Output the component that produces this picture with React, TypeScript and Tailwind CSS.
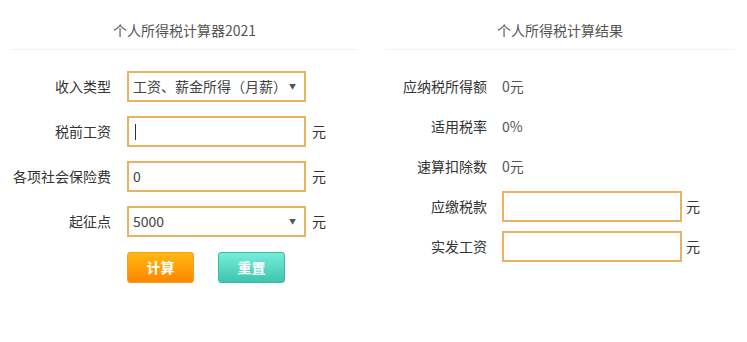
import React from "react";

const font = { fontFamily: '"Noto Sans CJK SC", "Noto Sans", sans-serif' };

function Header({ title }: { title: string }) {
  return (
    <div className="mx-3 h-[50px] border-b border-[#f1f1f1] flex items-end justify-center pb-[10px]">
      <span className="text-[14px] leading-[18px] text-[#555]">{title}</span>
    </div>
  );
}

function LeftRow({ label, children, unit }: { label: string; children: React.ReactNode; unit?: boolean }) {
  return (
    <div className="flex items-center h-[31px] mb-[14px]">
      <div className="w-[111px] text-right text-[14px] text-[#333]">{label}</div>
      <div className="ml-[16px] w-[179px] h-[31px]">{children}</div>
      {unit && <span className="ml-[6px] text-[14px] text-[#333]">元</span>}
    </div>
  );
}

function Box({ children }: { children?: React.ReactNode }) {
  return (
    <div className="w-full h-full border-2 border-[#e9b263] bg-white flex items-center px-[4px] text-[14px] text-[#444]">
      {children}
    </div>
  );
}

function SelectBox({ value }: { value: string }) {
  return (
    <Box>
      <span className="flex-1 whitespace-nowrap">{value}</span>
      <span className="text-[7px] text-[#555] mr-[4px]">▼</span>
    </Box>
  );
}

function RightRow({ label, children, unit }: { label: string; children: React.ReactNode; unit?: boolean }) {
  return (
    <div className="flex items-center h-[30px] mb-[10px]">
      <div className="w-[114px] text-right text-[14px] text-[#333]">{label}</div>
      <div className="ml-[15px] text-[14px] text-[#555]">{children}</div>
      {unit && <span className="ml-[4px] text-[14px] text-[#333]">元</span>}
    </div>
  );
}

export default function App() {
  return (
    <div style={font} className="w-[747px] h-[342px] bg-white flex">
      <div className="w-[369px]">
        <Header title="个人所得税计算器2021" />
        <div className="pt-[21px]">
          <LeftRow label="收入类型">
            <SelectBox value="工资、薪金所得（月薪）" />
          </LeftRow>
          <LeftRow label="税前工资" unit>
            <Box>
              <span className="inline-block w-[1px] h-[16px] bg-[#333] ml-[2px]" />
            </Box>
          </LeftRow>
          <LeftRow label="各项社会保险费" unit>
            <Box>0</Box>
          </LeftRow>
          <LeftRow label="起征点" unit>
            <SelectBox value="5000" />
          </LeftRow>
          <div className="flex pl-[127px] gap-[24px] pt-[1px]">
            <button className="w-[67px] h-[31px] rounded-[3px] border border-[#f2a020] bg-gradient-to-b from-[#ffb812] to-[#ff8600] text-white font-bold text-[14px]">
              计算
            </button>
            <button className="w-[67px] h-[31px] rounded-[3px] border border-[#3fb9a6] bg-gradient-to-b from-[#74eed9] to-[#3dc4ae] text-white font-bold text-[14px]">
              重置
            </button>
          </div>
        </div>
      </div>
      <div className="w-[4px]" />
      <div className="w-[374px]">
        <Header title="个人所得税计算结果" />
        <div className="pt-[21px]">
          <RightRow label="应纳税所得额">0元</RightRow>
          <RightRow label="适用税率">0%</RightRow>
          <RightRow label="速算扣除数">0元</RightRow>
          <RightRow label="应缴税款" unit>
            <div className="w-[180px] h-[31px]"><Box /></div>
          </RightRow>
          <RightRow label="实发工资" unit>
            <div className="w-[180px] h-[31px]"><Box /></div>
          </RightRow>
        </div>
      </div>
    </div>
  );
}
